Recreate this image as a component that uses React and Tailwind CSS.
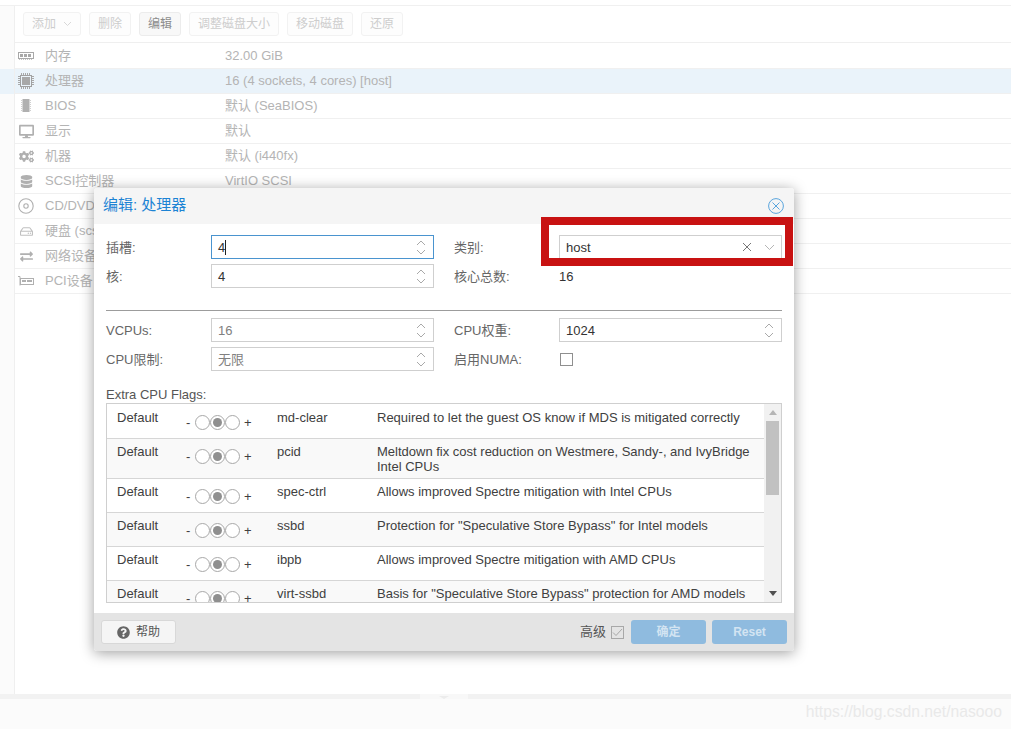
import React from 'react';
import { FaDesktop, FaCogs, FaDatabase, FaRegHdd, FaExchangeAlt, FaQuestionCircle } from 'react-icons/fa';

const font = { fontFamily: '"Liberation Sans", "Noto Sans CJK SC", sans-serif' };

function MemoryIcon() {
  return (
    <svg width="16" height="16" viewBox="0 0 16 16" fill="none">
      <rect x="0.5" y="4.5" width="15" height="6" fill="none" stroke="#a8a8a8" />
      <rect x="2" y="6" width="3" height="3" fill="#a8a8a8" />
      <rect x="6" y="6" width="3" height="3" fill="#a8a8a8" />
      <rect x="10" y="6" width="3" height="3" fill="#a8a8a8" />
      <path d="M1 11.5h14" stroke="#c4c4c4" strokeDasharray="1 1" />
    </svg>
  );
}

function CpuIcon() {
  return (
    <svg width="16" height="16" viewBox="0 0 16 16" fill="none">
      <rect x="2.5" y="2.5" width="11" height="11" stroke="#a0a0a0" />
      <rect x="4" y="4" width="8" height="8" fill="#a8a8a8" />
      <path d="M0 3.5h2M0 5.5h2M0 7.5h2M0 9.5h2M0 11.5h2M14 3.5h2M14 5.5h2M14 7.5h2M14 9.5h2M14 11.5h2M3.5 0v2M5.5 0v2M7.5 0v2M9.5 0v2M11.5 0v2M3.5 14v2M5.5 14v2M7.5 14v2M9.5 14v2M11.5 14v2" stroke="#a8a8a8" />
    </svg>
  );
}

function BiosIcon() {
  return (
    <svg width="16" height="16" viewBox="0 0 16 16" fill="none">
      <rect x="4.5" y="1" width="7" height="13" fill="#b0b0b0" />
      <path d="M3 2.5h1.5M3 4.5h1.5M3 6.5h1.5M3 8.5h1.5M3 10.5h1.5M3 12.5h1.5M11.5 2.5H13M11.5 4.5H13M11.5 6.5H13M11.5 8.5H13M11.5 10.5H13M11.5 12.5H13" stroke="#d0d0d0" />
    </svg>
  );
}

function DiscIcon() {
  return (
    <svg width="16" height="16" viewBox="0 0 16 16" fill="none">
      <circle cx="8" cy="8" r="7.2" stroke="#b0b0b0" strokeWidth="1.1" />
      <circle cx="8" cy="8" r="2.2" stroke="#b0b0b0" strokeWidth="1.1" />
    </svg>
  );
}

function PciIcon() {
  return (
    <svg width="16" height="16" viewBox="0 0 16 16" fill="none">
      <path d="M0 3.5h2v9" stroke="#b0b0b0" />
      <rect x="2.5" y="5.5" width="13" height="6" stroke="#b0b0b0" />
      <rect x="4" y="7" width="4" height="2" fill="#b0b0b0" />
      <rect x="9" y="7" width="5" height="2" fill="#b0b0b0" />
    </svg>
  );
}

const rows = [
  { icon: <MemoryIcon />, name: '内存', value: '32.00 GiB' },
  { icon: <CpuIcon />, name: '处理器', value: '16 (4 sockets, 4 cores) [host]', selected: true },
  { icon: <BiosIcon />, name: 'BIOS', value: '默认 (SeaBIOS)' },
  { icon: <FaDesktop size={15} color="#b0b0b0" />, name: '显示', value: '默认' },
  { icon: <FaCogs size={15} color="#b0b0b0" />, name: '机器', value: '默认 (i440fx)' },
  { icon: <FaDatabase size={13} color="#b0b0b0" />, name: 'SCSI控制器', value: 'VirtIO SCSI' },
  { icon: <DiscIcon />, name: 'CD/DVD' },
  { icon: <FaRegHdd size={13} color="#c0c0c0" />, name: '硬盘 (scs' },
  { icon: <FaExchangeAlt size={13} color="#b0b0b0" />, name: '网络设备' },
  { icon: <PciIcon />, name: 'PCI设备' },
];

const flags = [
  { name: 'md-clear', desc: 'Required to let the guest OS know if MDS is mitigated correctly', h: 'h-[34px]' },
  { name: 'pcid', desc: 'Meltdown fix cost reduction on Westmere, Sandy-, and IvyBridge Intel CPUs', h: 'h-[40px]' },
  { name: 'spec-ctrl', desc: 'Allows improved Spectre mitigation with Intel CPUs', h: 'h-[34px]' },
  { name: 'ssbd', desc: 'Protection for "Speculative Store Bypass" for Intel models', h: 'h-[34px]' },
  { name: 'ibpb', desc: 'Allows improved Spectre mitigation with AMD CPUs', h: 'h-[34px]' },
  { name: 'virt-ssbd', desc: 'Basis for "Speculative Store Bypass" protection for AMD models', h: 'h-[34px]' },
];

function Spinner() {
  return (
    <svg width="10" height="17" viewBox="0 0 10 17" fill="none" stroke="#a9a9a9" strokeWidth="1">
      <path d="M1 6l4-4 4 4M1 11l4 4 4-4" />
    </svg>
  );
}

function Field({ value, focused, muted }) {
  return (
    <div className={`w-[223px] h-[24px] flex items-center justify-between pl-[6px] pr-[7px] border bg-white ${focused ? 'border-[#4a94cf]' : 'border-[#cfcfcf]'}`}>
      <span className={`flex items-center pt-px text-[13px] ${muted ? 'text-[#808080]' : 'text-[#333]'}`}>
        {value}
        {focused && <span className="w-px h-[15px] bg-[#222]" />}
      </span>
      <Spinner />
    </div>
  );
}

function Label({ children }) {
  return <div className="w-[105px] pt-px text-[13px] text-[#666]">{children}</div>;
}

function Radio({ checked }) {
  return (
    <div className="w-[15px] h-[15px] rounded-full border border-[#a8a8a8] bg-white flex items-center justify-center">
      {checked && <div className="w-[9px] h-[9px] rounded-full bg-[#8f8f8f]" />}
    </div>
  );
}

function FlagRow({ flag, odd }) {
  return (
    <div className={`flex ${flag.h} shrink-0 border-b border-[#d6d6d6] text-[13px] leading-[15px] text-[#404040] ${odd ? 'bg-[#f9f9f9]' : 'bg-white'}`}>
      <div className="w-[80px] pl-[10px] pt-[5px]">Default</div>
      <div className="w-[90px] pt-[10px] flex items-start">
        <span className="w-[8px] -ml-px mr-px leading-[15px]">-</span>
        <Radio />
        <Radio checked />
        <Radio />
        <span className="ml-[4px] leading-[15px]">+</span>
      </div>
      <div className="w-[100px] pt-[5px]">{flag.name}</div>
      <div className="w-[380px] pt-[5px]">{flag.desc}</div>
    </div>
  );
}

function ToolButton({ children, active, caret }) {
  return (
    <div className={`h-[24px] px-[8px] flex items-center gap-[7px] rounded-[3px] border text-[12px] ${active ? 'border-[#ececec] bg-[#f8f8f8] text-[#8c8c8c]' : 'border-[#f2f2f2] bg-[#fdfdfd] text-[#cdcdcd]'}`}>
      {children}
      {caret && (
        <svg width="9" height="6" viewBox="0 0 9 6" fill="none" stroke="#d8d8d8"><path d="M1 1l3.5 3.5L8 1" /></svg>
      )}
    </div>
  );
}

function Dialog() {
  return (
    <div className="absolute left-[94px] top-[188px] w-[700px] h-[463px] flex flex-col bg-white rounded-[3px] shadow-[0_2px_14px_rgba(0,0,0,0.38)]">
      <div className="h-[36px] shrink-0 bg-[#f5f5f5] rounded-t-[3px] flex items-center justify-between pl-[9px] pr-[10px]">
        <span className="pb-[2px] text-[15px] text-[#1c83d4]">编辑: 处理器</span>
        <svg width="16" height="16" viewBox="0 0 16 16" fill="none" stroke="#5aa5dd" strokeWidth="1">
          <circle cx="8" cy="8" r="7.4" />
          <path d="M4.5 4.5l7 7M11.5 4.5l-7 7" />
        </svg>
      </div>

      <div className="flex-1 px-[12px] pt-[11px] flex flex-col">
        <div className="flex flex-col gap-[5px]">
          <div className="flex items-center h-[24px]">
            <Label>插槽:</Label>
            <Field value="4" focused />
            <div className="w-[20px]" />
            <Label>类别:</Label>
            <div className="w-[223px] h-[24px] flex items-center justify-between pl-[6px] pr-[6px] border border-[#cfcfcf]">
              <span className="pt-px text-[13px] text-[#333]">host</span>
              <div className="flex items-center gap-[12px]">
                <svg width="10" height="10" viewBox="0 0 10 10" fill="none" stroke="#777"><path d="M1 1l8 8M9 1l-8 8" /></svg>
                <svg width="11" height="7" viewBox="0 0 11 7" fill="none" stroke="#b5b5b5"><path d="M1 1l4.5 4.5L10 1" /></svg>
              </div>
            </div>
          </div>
          <div className="flex items-center h-[24px]">
            <Label>核:</Label>
            <Field value="4" />
            <div className="w-[20px]" />
            <Label>核心总数:</Label>
            <span className="pt-px text-[13px] text-[#333]">16</span>
          </div>
        </div>

        <div className="mt-[22px] h-px shrink-0 bg-[#9c9c9c]" />

        <div className="mt-[7px] flex flex-col gap-[5px]">
          <div className="flex items-center h-[24px]">
            <Label>VCPUs:</Label>
            <Field value="16" muted />
            <div className="w-[20px]" />
            <Label>CPU权重:</Label>
            <Field value="1024" />
          </div>
          <div className="flex items-center h-[24px]">
            <Label>CPU限制:</Label>
            <Field value="无限" muted />
            <div className="w-[20px]" />
            <Label>启用NUMA:</Label>
            <div className="ml-px w-[13px] h-[13px] border border-[#8f8f8f]" />
          </div>
        </div>

        <div className="mt-[16px] h-[16px] leading-[16px] text-[13px] text-[#555]">Extra CPU Flags:</div>

        <div className="h-[200px] border border-[#cfcfcf] flex overflow-hidden">
          <div className="w-[658px] pt-px flex flex-col overflow-hidden">
            {flags.map((f, i) => <FlagRow key={f.name} flag={f} odd={i % 2 === 1} />)}
          </div>
          <div className="w-[17px] bg-[#f1f1f1] flex flex-col items-center pt-[6px] pb-[6px]">
            <svg width="8" height="5" viewBox="0 0 8 5"><path d="M4 0l4 5H0z" fill="#b5b5b5" /></svg>
            <div className="w-[13px] h-[74px] mt-[6px] bg-[#c1c1c1]" />
            <div className="flex-1" />
            <svg width="8" height="5" viewBox="0 0 8 5"><path d="M0 0h8L4 5z" fill="#505050" /></svg>
          </div>
        </div>
      </div>

      <div className="h-[38px] shrink-0 bg-[#e4e4e4] rounded-b-[3px] flex items-center justify-between pl-[7px] pr-[7px]">
        <div className="w-[75px] h-[24px] flex items-center justify-center gap-[6px] rounded-[3px] border border-[#d8d8d8] bg-[#f5f5f5] text-[12px] text-[#555]">
          <FaQuestionCircle size={13} color="#666" />
          帮助
        </div>
        <div className="flex items-center">
          <span className="text-[13px] text-[#555]">高级</span>
          <div className="ml-[5px] w-[13px] h-[13px] border border-[#a8a8a8] flex items-center justify-center">
            <svg width="11" height="9" viewBox="0 0 11 9" fill="none" stroke="#a8a8a8"><path d="M1 4.5l3 3L10 1" /></svg>
          </div>
          <div className="ml-[7px] w-[75px] h-[24px] flex items-center justify-center rounded-[3px] bg-[#8fbbdf] text-[12px] font-bold text-[#d3e4f2]">确定</div>
          <div className="ml-[6px] w-[75px] h-[24px] flex items-center justify-center rounded-[3px] bg-[#8fbbdf] text-[12px] font-bold text-[#d3e4f2]">Reset</div>
        </div>
      </div>

      <div className="absolute left-[447px] top-[29px] w-[252px] h-[49px] border-8 border-[#c81212]" />
    </div>
  );
}

export default function App() {
  return (
    <div style={font} className="relative w-[1011px] h-[729px] overflow-hidden bg-white flex flex-col">
      <div className="h-[5px] shrink-0" />
      <div className="h-[689px] shrink-0 border-t border-[#f0f0f0] flex">
        <div className="w-[15px] shrink-0 border-r border-[#efefef] bg-[#fbfbfb] pt-[63px]">
          <div className="h-[25px] bg-[#eaf3fa]" />
        </div>
        <div className="flex-1">
          <div className="h-[37px] border-b border-[#efefef] pl-[8px] flex items-center gap-[8px]">
            <ToolButton caret>添加</ToolButton>
            <ToolButton>删除</ToolButton>
            <ToolButton active>编辑</ToolButton>
            <ToolButton>调整磁盘大小</ToolButton>
            <ToolButton>移动磁盘</ToolButton>
            <ToolButton>还原</ToolButton>
          </div>
          <div className="pt-px">
            {rows.map(r => (
              <div key={r.name} className={`h-[25px] flex items-center border-b border-[#f0f0f0] text-[13px] text-[#b4b4b4] ${r.selected ? 'bg-[#eaf3fa]' : ''}`}>
                <div className="w-[30px] pl-[3px] flex justify-start">
                  <div className="w-[16px] flex justify-center">{r.icon}</div>
                </div>
                <div className="w-[180px] whitespace-nowrap">{r.name}</div>
                {r.value && <div>{r.value}</div>}
              </div>
            ))}
          </div>
        </div>
      </div>
      <div className="h-[5px] shrink-0 bg-[#f2f2f2] pl-[420px]">
        <div className="w-[48px] h-[5px] bg-[#f8f8f8] flex justify-center items-end">
          <svg width="10" height="3" viewBox="0 0 10 3"><path d="M0 0h10L5 3z" fill="#ececec" /></svg>
        </div>
      </div>
      <div className="flex-1 bg-[#fbfbfb] flex justify-end items-start pr-[9px] pt-[1px]">
        <span className="text-[15.7px] text-[#e9e9e9]">https://blog.csdn.net/nasooo</span>
      </div>
      <Dialog />
    </div>
  );
}
